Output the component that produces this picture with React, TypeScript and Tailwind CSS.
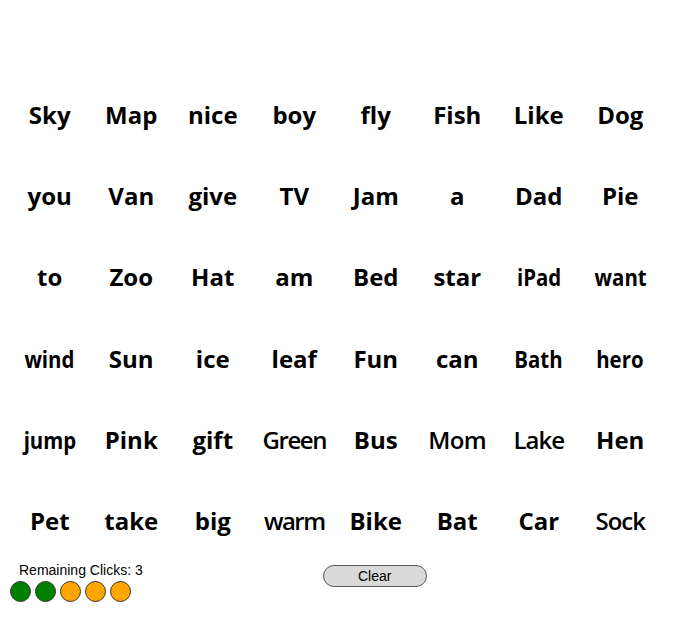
import React from "react";

type W = { t: string; c?: string };

const N = "inline-block font-bold scale-x-[0.85]";
const rows: W[][] = [
  [{ t: "Sky" }, { t: "Map" }, { t: "nice" }, { t: "boy" }, { t: "fly" }, { t: "Fish" }, { t: "Like" }, { t: "Dog" }],
  [{ t: "you" }, { t: "Van" }, { t: "give" }, { t: "TV" }, { t: "Jam" }, { t: "a" }, { t: "Dad" }, { t: "Pie" }],
  [{ t: "to" }, { t: "Zoo" }, { t: "Hat" }, { t: "am" }, { t: "Bed" }, { t: "star" }, { t: "iPad", c: N }, { t: "want", c: N }],
  [{ t: "wind", c: N }, { t: "Sun" }, { t: "ice" }, { t: "leaf" }, { t: "Fun" }, { t: "can" }, { t: "Bath", c: N }, { t: "hero", c: N }],
  [
    { t: "jump", c: N },
    { t: "Pink" },
    { t: "gift" },
    { t: "Green", c: "font-semibold tracking-[-1.4px]" },
    { t: "Bus" },
    { t: "Mom", c: "font-semibold tracking-[-0.6px]" },
    { t: "Lake", c: "font-semibold tracking-[-1px]" },
    { t: "Hen" },
  ],
  [
    { t: "Pet" },
    { t: "take" },
    { t: "big" },
    { t: "warm", c: "font-semibold tracking-[-1.5px]" },
    { t: "Bike" },
    { t: "Bat" },
    { t: "Car" },
    { t: "Sock", c: "font-semibold tracking-[-1px]" },
  ],
];

function Word({ w }: { w: W }) {
  return (
    <div className="flex items-center justify-center">
      <span className={`text-[24px] leading-none text-black font-['Open_Sans',sans-serif] ${w.c ?? "font-bold"}`}>
        {w.t}
      </span>
    </div>
  );
}

function Dot({ green }: { green?: boolean }) {
  return (
    <span
      className={`w-[21px] h-[21px] rounded-full border border-[#333] ${green ? "bg-[#008000]" : "bg-[#ffa500]"}`}
    />
  );
}

export default function App() {
  return (
    <div className="w-[675px] h-[618px] bg-white">
      <div className="ml-[9px] pt-[74px] grid grid-cols-[repeat(8,81.5px)] grid-rows-[repeat(6,81.3px)]">
        {rows.flat().map((w, i) => (
          <Word key={i} w={w} />
        ))}
      </div>
      <div className="flex items-start font-['Liberation_Sans',Arial,sans-serif]">
        <div className="pl-[10px] pt-[1px] flex flex-col">
          <div className="pl-[9px] text-[14px] leading-[15px] text-black">Remaining Clicks: 3</div>
          <div className="flex gap-[4px] mt-[3px]">
            <Dot green />
            <Dot green />
            <Dot />
            <Dot />
            <Dot />
          </div>
        </div>
        <button className="ml-[180px] mt-[3px] w-[104px] h-[22px] rounded-full bg-[#d9d9d9] border border-[#555] text-[14px] leading-none text-black flex items-center justify-center">
          Clear
        </button>
      </div>
    </div>
  );
}
